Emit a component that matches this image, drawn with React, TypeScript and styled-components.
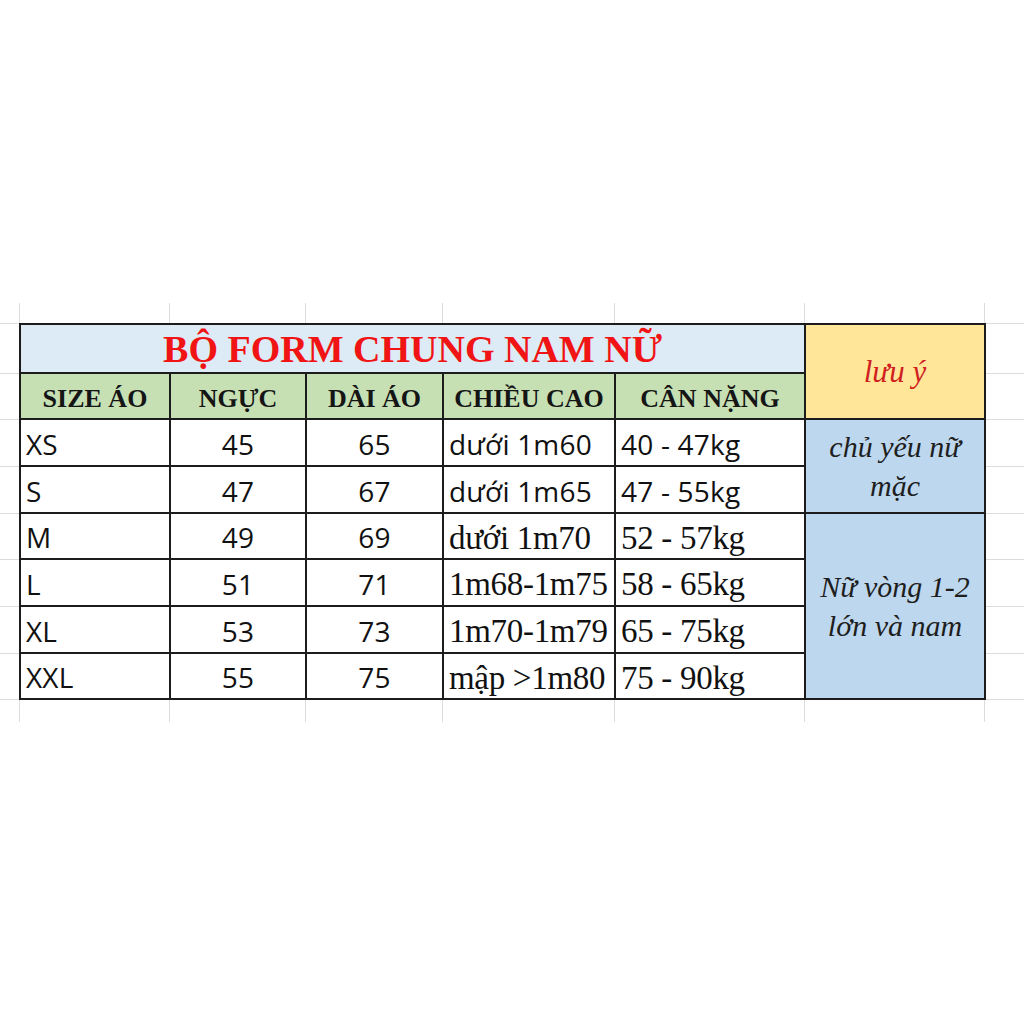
import React from 'react';
import styled, { createGlobalStyle } from 'styled-components';

const COLS = [150, 136, 137, 172, 190, 180];
const ROWS = [49, 46, 47, 47, 46, 47, 47, 46];
const GRID = '#dcdcdc';
const INK = '#1c1c1c';

const GlobalStyle = createGlobalStyle`
  html, body {
    margin: 0;
    padding: 0;
    background: #ffffff;
  }
`;

const Page = styled.div`
  width: 1024px;
  height: 1024px;
  padding-top: 303px;
  box-sizing: border-box;
  overflow: hidden;
`;

const Sheet = styled.div`
  display: flex;
  flex-direction: column;
`;

const Strip = styled.div<{ h: number }>`
  display: grid;
  grid-template-columns: 19px ${COLS.map(c => `${c}px`).join(' ')} 1fr;
  height: ${props => props.h}px;
  margin-left: 1px;
`;

const StripCell = styled.div`
  border-right: 1px solid ${GRID};
  &:last-child {
    border-right: none;
  }
`;

const Middle = styled.div`
  display: flex;
`;

const Gutter = styled.div<{ grow?: boolean }>`
  display: flex;
  flex-direction: column;
  width: ${props => (props.grow ? 'auto' : '19px')};
  flex: ${props => (props.grow ? 1 : 'none')};
  border-top: 1px solid ${GRID};
`;

const GutterRow = styled.div<{ h: number }>`
  height: ${props => props.h}px;
  box-sizing: border-box;
  border-bottom: 1px solid ${GRID};
  flex: none;
`;

const Table = styled.div`
  display: grid;
  grid-template-columns: ${COLS.map(c => `${c}px`).join(' ')};
  grid-template-rows: ${ROWS.map(r => `${r}px`).join(' ')};
  border-top: 2px solid ${INK};
  border-left: 2px solid ${INK};
  flex: none;
`;

const Cell = styled.div<{ align?: 'left' | 'center' }>`
  display: flex;
  align-items: center;
  justify-content: ${props => (props.align === 'left' ? 'flex-start' : 'center')};
  padding: ${props => (props.align === 'left' ? '2px 0 0 5px' : '2px 0 0 0')};
  border-right: 2px solid ${INK};
  border-bottom: 2px solid ${INK};
  background: #ffffff;
  white-space: nowrap;
  overflow: visible;
  box-sizing: border-box;
  min-width: 0;
`;

const TitleCell = styled(Cell)`
  grid-column: 1 / 6;
  background: #ddebf7;
  color: #f01414;
  font-family: 'Liberation Serif', 'Times New Roman', serif;
  font-weight: 700;
  font-size: 38px;
  padding-top: 1px;
`;

const HeadCell = styled(Cell)`
  background: #c6e0b4;
  color: #151515;
  font-family: 'Liberation Serif', 'Times New Roman', serif;
  font-weight: 700;
  font-size: 26px;
  padding-top: 5px;
`;

const NoteCell = styled(Cell)<{ span: string; tone: 'yellow' | 'blue' }>`
  grid-column: 6;
  grid-row: ${props => props.span};
  background: ${props => (props.tone === 'yellow' ? '#ffe699' : '#bdd7ee')};
  color: ${props => (props.tone === 'yellow' ? '#d11f1f' : '#1e1e1e')};
  font-family: 'Liberation Serif', 'Times New Roman', serif;
  font-style: italic;
  font-size: ${props => (props.tone === 'yellow' ? 31 : 30)}px;
  line-height: 39px;
  text-align: center;
  white-space: normal;
  padding: 0 6px;
`;

const DataCell = styled(Cell)<{ serif?: boolean }>`
  color: #111111;
  font-family: ${props =>
    props.serif
      ? "'Liberation Serif', 'Times New Roman', serif"
      : "'Open Sans', 'Noto Sans', sans-serif"};
  font-size: ${props => (props.serif ? 33 : 28)}px;
  padding-top: ${props => (props.serif ? 4 : 2)}px;
  letter-spacing: ${props => (props.serif ? '-0.3px' : '0.2px')};
`;

interface SizeRow {
  size: string;
  chest: number;
  length: number;
  height: string;
  weight: string;
  serif: boolean;
}

const rows: SizeRow[] = [
  { size: 'XS', chest: 45, length: 65, height: 'dưới 1m60', weight: '40 - 47kg', serif: false },
  { size: 'S', chest: 47, length: 67, height: 'dưới 1m65', weight: '47 - 55kg', serif: false },
  { size: 'M', chest: 49, length: 69, height: 'dưới 1m70', weight: '52 - 57kg', serif: true },
  { size: 'L', chest: 51, length: 71, height: '1m68-1m75', weight: '58 - 65kg', serif: true },
  { size: 'XL', chest: 53, length: 73, height: '1m70-1m79', weight: '65 - 75kg', serif: true },
  { size: 'XXL', chest: 55, length: 75, height: 'mập >1m80', weight: '75 - 90kg', serif: true }
];

const headers = ['SIZE ÁO', 'NGỰC', 'DÀI ÁO', 'CHIỀU CAO', 'CÂN NẶNG'];

const App: React.FC = () => {
  const stripCells = Array.from({ length: COLS.length + 2 });

  return (
    <Page>
      <GlobalStyle />
      <Sheet>
        <Strip h={20}>
          {stripCells.map((_, i) => (
            <StripCell key={i} />
          ))}
        </Strip>

        <Middle>
          <Gutter>
            {ROWS.map((h, i) => (
              <GutterRow key={i} h={i === 0 ? h + 1 : h} />
            ))}
          </Gutter>

          <Table>
            <TitleCell>BỘ FORM CHUNG NAM NỮ</TitleCell>
            <NoteCell span="1 / 3" tone="yellow">lưu ý</NoteCell>

            {headers.map(h => (
              <HeadCell key={h}>{h}</HeadCell>
            ))}

            {rows.map(r => (
              <React.Fragment key={r.size}>
                <DataCell align="left">{r.size}</DataCell>
                <DataCell>{r.chest}</DataCell>
                <DataCell>{r.length}</DataCell>
                <DataCell align="left" serif={r.serif}>{r.height}</DataCell>
                <DataCell align="left" serif={r.serif}>{r.weight}</DataCell>
              </React.Fragment>
            ))}

            <NoteCell span="3 / 5" tone="blue">chủ yếu nữ mặc</NoteCell>
            <NoteCell span="5 / 9" tone="blue">Nữ vòng 1-2 lớn và nam</NoteCell>
          </Table>

          <Gutter grow>
            {ROWS.map((h, i) => (
              <GutterRow key={i} h={i === 0 ? h + 1 : h} />
            ))}
          </Gutter>
        </Middle>

        <Strip h={22}>
          {stripCells.map((_, i) => (
            <StripCell key={i} />
          ))}
        </Strip>
      </Sheet>
    </Page>
  );
};

export default App;
